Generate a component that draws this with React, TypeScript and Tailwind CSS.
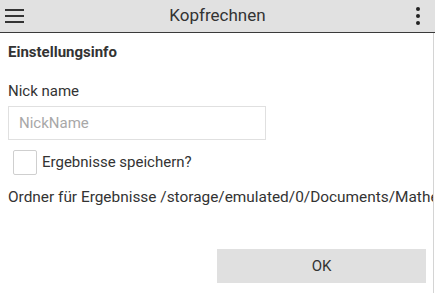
import React from "react";

const Hamburger = () => (
  <svg width="20" height="16" viewBox="0 0 20 16" className="text-[#333]">
    <rect x="0" y="1" width="19" height="2" fill="currentColor" />
    <rect x="0" y="7" width="19" height="2" fill="currentColor" />
    <rect x="0" y="13" width="19" height="2" fill="currentColor" />
  </svg>
);

const Kebab = () => (
  <svg width="6" height="20" viewBox="0 0 6 20" className="text-[#222]">
    <circle cx="3" cy="3" r="2" fill="currentColor" />
    <circle cx="3" cy="10" r="2" fill="currentColor" />
    <circle cx="3" cy="17" r="2" fill="currentColor" />
  </svg>
);

export default function App() {
  return (
    <div className="w-[435px] h-[293px] bg-white overflow-hidden text-[#333] font-['Roboto',sans-serif] flex flex-col">
      <header className="h-[33px] shrink-0 bg-[#e1e1e1] border-b border-[#3a3a3a] flex items-center">
        <div className="w-[40px] pl-[5px] flex">
          <Hamburger />
        </div>
        <span className="flex-1 text-center text-[17px]">Kopfrechnen</span>
        <div className="w-[40px] pr-[14px] flex justify-end">
          <Kebab />
        </div>
      </header>

      <div className="flex-1 border-r border-[#d4d4d4] mr-[1px] pl-2 overflow-hidden">
        <h2 className="font-bold text-[15px] leading-none mt-[12px]">Einstellungsinfo</h2>

        <p className="text-[15px] leading-none mt-[24px]">Nick name</p>
        <input
          className="block mt-[7px] w-[258px] h-[34px] border border-[#e0e0e0] px-[10px] text-[15px] outline-none placeholder:text-[#a8a8a8]"
          placeholder="NickName"
        />

        <label className="flex items-center gap-[5px] mt-[10px] ml-[5px]">
          <span className="w-[24px] h-[25px] border border-[#cfcfcf] rounded-[2px]" />
          <span className="text-[15px] leading-none">Ergebnisse speichern?</span>
        </label>

        <p className="text-[15.4px] leading-none whitespace-nowrap mt-[15px]">
          Ordner für Ergebnisse /storage/emulated/0/Documents/MatheTrainer
        </p>

        <div className="flex justify-end pr-[7px] mt-[44px]">
          <button className="w-[209px] h-[34px] bg-[#e0e0e0] text-[15px]">OK</button>
        </div>
      </div>
    </div>
  );
}
